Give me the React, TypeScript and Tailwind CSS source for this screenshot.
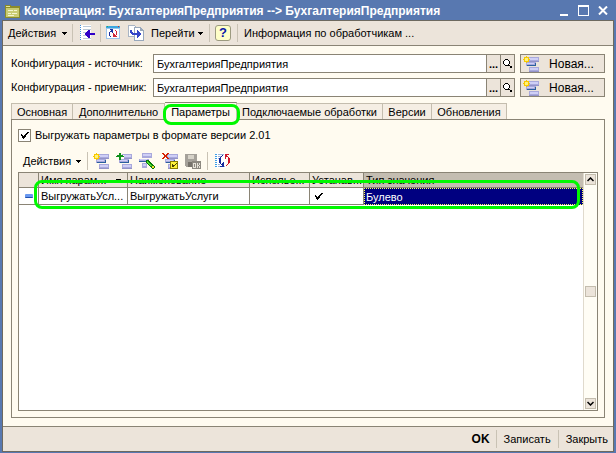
import React from "react";

const Caret = () => (
  <svg width="5" height="3" viewBox="0 0 5 3" shapeRendering="crispEdges" className="shrink-0">
    <path d="M0 0h5v1H0zM1 1h3v1H1zM2 2h1v1H2z" fill="#000" />
  </svg>
);

const Sep = () => <div className="h-[18px] w-px bg-[#c9c2b4]" />;

const Bars = () => (
  <>
    <path d="M5 1h11v5H5zM3 6h10v4H3zM6 11h10v5H6z" fill="#a9a9dc" />
    <path d="M6 2h9v2H6zM4 7h7v1H4zM7 12h8v2H7z" fill="#cfcff6" />
    <path d="M5 5h11v1H5zM6 15h10v1H6z" fill="#9393c8" />
    <path d="M4 9h9v1H4zM12 7h1v2h-1z" fill="#2a5f9e" />
  </>
);

const Icon = ({ children }: { children: React.ReactNode }) => (
  <svg width="16" height="16" viewBox="0 0 16 16" shapeRendering="crispEdges" className="shrink-0">
    {children}
  </svg>
);

const AddIcon = () => (
  <Icon>
    <Bars />
    <path d="M3 0h1v1H3zM3 6h1v1H3zM0 3h1v1H0zM6 3h1v1H6zM1 1h1v1H1zM5 1h1v1H5zM1 5h1v1H1zM5 5h1v1H5zM2 1h3v1H2zM2 5h3v1H2zM1 2h1v3H1zM5 2h1v3H5z" fill="#f7c800" />
    <path d="M2 2h3v3H2z" fill="#fff27a" />
  </Icon>
);
const PlusIcon = () => (
  <Icon>
    <Bars />
    <path d="M2 0h4v2h2v4H5v1H2z" fill="#fffbf0" />
    <path d="M3 0h2v7H3zM0 3h8v1H0zM1 2h6v2H1z" fill="#10901c" />
  </Icon>
);
const EditIcon = () => (
  <Icon>
    <path d="M3 0h10v5H3zM0 6h10v3H0zM3 10h5v5H3z" fill="#a9a9dc" />
    <path d="M4 1h8v2H4zM1 6h7v1H1zM4 11h3v2H4z" fill="#cfcff6" />
    <path d="M0 8h9v1H0z" fill="#2a5f9e" />
    <path d="M7 7h3v1h1v1h1v1h1v1h1v1h1v1h1v2h-1v1h-2v-1h-1v-1h-1v-1h-1v-1H9v-1H8v-1H7z" fill="#087808" />
    <path d="M8 8h1v1h1v1h1v1h1v1h1v1h-2v-1h-1v-1H9v-1H8z" fill="#4fe02f" />
    <path d="M13 13h2v2h-2z" fill="#f6dc30" />
  </Icon>
);
const DeleteIcon = () => (
  <Icon>
    <Bars />
    <path d="M0 0h2v1h1v1h1V1h1V0h2v1H6v1H5v2h1v1h1v1H5V5H4V4H3v1H2v1H0V5h1V4h1V2H1V1H0z" fill="#d42000" />
    <path d="M8 8h8v8H8z" fill="#8b7d00" />
    <path d="M9 9h6v6H9z" fill="#fff23c" />
    <path d="M10 11h1v1h1v1h-1v1h-1zM12 12h1v-1h1v-1h1v1h-1v1h-1v1h-1zM11 12h1v2h-1z" fill="#4a4300" />
  </Icon>
);
const SaveIcon = () => (
  <Icon>
    <path d="M0 1h12v13H1v-1H0z" fill="#a5a19a" />
    <path d="M3 2h6v4H3z" fill="#d6d2c8" />
    <path d="M3 9h5v5H3z" fill="#77736c" />
    <path d="M7 8h9v8H7z" fill="#8c8880" />
    <path d="M8 10h3v5H8zM12 10h1v5h-1zM13 12h1v1h-1zM14 10h1v2h-1zM14 13h1v2h-1z" fill="#e6e2d8" />
    <path d="M9 11h1v3H9z" fill="#8c8880" />
  </Icon>
);
const CycleIcon = () => (
  <Icon>
    <path d="M1 0h10v15H1z" fill="#fff" />
    <path d="M3 1h6v1H3zM3 3h4v1H3zM3 5h2v1H3zM3 11h2v1H3zM3 13h7v1H3z" fill="#9db5d8" />
    <path d="M0 1h2v1H0zM0 3h2v1H0zM0 5h2v1H0zM0 7h2v1H0zM0 9h2v1H0zM0 11h2v1H0zM0 13h2v1H0z" fill="#3d9ee8" />
    <path d="M7 2h1v1H7zM6 3h1v1H6zM5 4h1v7H5zM4 5h1v5H4zM6 11h1v1H6zM7 12h1v1H7zM8 9h1v5H8zM5 13h3v1H5zM7 10h1v2H7z" fill="#172a9c" />
    <path d="M10 1h1v5h-1zM11 1h3v1h-3zM11 2h1v2h-1zM12 3h1v1h-1zM13 4h1v7h-1zM14 5h1v5h-1zM12 11h1v1h-1zM11 12h1v1h-1z" fill="#d0182c" />
  </Icon>
);
const InsertIcon = () => (
  <Icon>
    <path d="M1 0h11v15H1z" fill="#fff" />
    <path d="M4 1h8v1H4zM4 4h8v1H4zM4 7h4v1H4zM4 10h5v1H4zM4 13h8v1H4z" fill="#b9c8d8" />
    <path d="M1 0h1v1H1zM1 2h1v1H1zM1 4h1v1H1zM1 6h1v1H1zM1 8h1v1H1zM1 10h1v1H1zM1 12h1v1H1zM1 14h1v1H1z" fill="#3b8ee0" />
    <path d="M6 8h1V7h1V6h1V5h2v3h5v2h-5v3H9v-1H8v-1H7v-1H6z" fill="#3000c8" />
  </Icon>
);
const RefreshIcon = () => (
  <Icon>
    <path d="M1 2h14v12H1z" fill="#9bc4ea" />
    <path d="M2 4h12v9H2z" fill="#fff" />
    <path d="M1 1h14v2H1z" fill="#3aa6e0" />
    <path d="M2 1h1v1H2z" fill="#30b050" />
    <path d="M13 1h1v1h-1z" fill="#d02020" />
    <path d="M4 7h1v4H4zM5 6h1v1H5zM5 11h1v1H5zM6 5h1v1H6zM5 4h3v1H5zM7 5h1v3H7zM6 6h1v1H6z" fill="#1c2f9e" />
    <path d="M10 5h1v1h-1zM11 6h1v4h-1zM10 10h1v1h-1zM8 8h1v4H8zM9 11h3v1H9zM9 9h1v2H9z" fill="#d02838" />
  </Icon>
);
const GoIcon = () => (
  <Icon>
    <path d="M0 0h7v1h1v1h1v10H0z" fill="#a8b4c4" />
    <path d="M1 1h6v10H1z" fill="#fff" />
    <path d="M6 2h7v1h1v1h1v1h1v11H6z" fill="#98a8bc" />
    <path d="M7 3h5v3h3v9H7z" fill="#fff" />
    <path d="M2 5h2v2h1v1h4V5h1v1h1v1h1v1h1v2h-1v1h-1v1h-1v1H9v-3H4V9H3V8H2z" fill="#3445c8" />
  </Icon>
);
const FolderIcon = () => (
  <Icon>
    <path d="M1 2h6v1h9v12H1z" fill="#8b8b2b" />
    <path d="M2 5h13v9H2z" fill="#c9cc73" />
    <path d="M2 3h4v1H2z" fill="#e2e4a0" />
    <path d="M4 7h5v1H4zM10 7h3v1h-3zM4 10h3v1H4zM8 10h5v1H8zM4 12h6v1H4z" fill="#f4f5cf" />
  </Icon>
);
const SearchIcon = () => (
  <svg width="9" height="9" viewBox="0 0 9 9" shapeRendering="crispEdges">
    <path d="M2 0h3v1H2zM1 1h1v1H1zM5 1h1v1H5zM0 2h1v3H0zM6 2h1v3H6zM1 5h1v1H1zM5 5h1v1H5zM2 6h4v1H2zM6 6h1v1H6zM7 7h2v2H7z" fill="#000" />
    <path d="M2 1h3v5H2zM1 2h5v3H1z" fill="#fff" />
  </svg>
);
const Tick = () => (
  <svg width="8" height="7" viewBox="0 0 8 7" shapeRendering="crispEdges">
    <path d="M0 2h1v1h1v1h1V3h1V2h1V1h1V0h2v1H7v1H6v1H5v1H4v1H3v1H2V5H1V4H0zM1 4h4v1H4v1H3v1H2V6H1zM6 1h1v1H6z" fill="#000" />
  </svg>
);

const Row = ({ id, label }: { id: string; label: string }) => (
  <div className="flex h-[19px] items-stretch">
    <label htmlFor={id} className="w-[142px] shrink-0 leading-[19px] whitespace-nowrap">
      {label}
    </label>
    <div className="flex min-w-0 flex-1 border border-[#8a8475] bg-white">
      <input id={id} defaultValue="БухгалтерияПредприятия" className="min-w-0 flex-1 bg-white px-[3px] outline-none" />
      <button className="w-[14px] border-l border-[#8a8475] bg-[#ece4da] leading-3 font-bold">...</button>
      <button aria-label="Открыть" className="flex w-[14px] items-center justify-center border-l border-[#8a8475] bg-[#ece4da]">
        <SearchIcon />
      </button>
    </div>
    <button className="ml-[5px] flex w-[85px] items-center border border-t-[#8a8475] border-r-[#8a8475] border-b-[#8a8475] border-l-[#8a8475] bg-[#ece4da] pl-[2px] text-[12px]">
      <AddIcon />
      <span className="flex-1 text-center">Новая...</span>
    </button>
  </div>
);

const tabs = [
  { name: "Основная", width: "w-[62px]" },
  { name: "Дополнительно", width: "w-[92px]" },
  { name: "Параметры", width: "w-[72px]" },
  { name: "Подключаемые обработки", width: "w-[146px]" },
  { name: "Версии", width: "w-[49px]" },
  { name: "Обновления", width: "w-[75px]" },
];

const Th = ({ children, active }: { children?: React.ReactNode; active?: boolean }) => (
  <th
    className={
      "h-[15px] overflow-hidden border-b border-[#8a8475] px-[2px] text-left leading-[14px] font-normal whitespace-nowrap " +
      (active ? "bg-[#c4bdb1]" : "border-r bg-[#ece4da]")
    }
  >
    {children}
  </th>
);

const td = "h-[17px] overflow-hidden border-r border-b border-[#8a8475] px-[2px] leading-4 whitespace-nowrap";

export default function App() {
  return (
    <div className="flex min-h-screen flex-col bg-[#5878b0] pr-[2px] pb-px pl-[2px] font-['Liberation_Sans',Arial,sans-serif] text-[11px] leading-4 text-black">
      <header className="flex h-5 items-center pt-px pl-[2px] text-white">
        <FolderIcon />
        <h1 className="ml-1 flex-1 text-[12px] font-bold whitespace-nowrap">
          Конвертация: БухгалтерияПредприятия --&gt; БухгалтерияПредприятия
        </h1>
        <div className="flex items-center gap-[9px] pr-[6px]">
          <button aria-label="Свернуть" className="flex h-[11px] w-[9px] items-end">
            <span className="h-[2px] w-2 bg-white" />
          </button>
          <button aria-label="Развернуть" className="h-[11px] w-[11px] border border-t-2 border-white" />
          <button aria-label="Закрыть окно">
            <svg width="10" height="9" viewBox="0 0 10 9">
              <path d="M1 0.500L9 8.500M9 0.500L1 8.500" stroke="#fff" strokeWidth="2" />
            </svg>
          </button>
        </div>
      </header>

      <div className="flex flex-1 flex-col border border-[#6d695f] bg-[#fffbf0]">
        <div className="flex h-[25px] items-center border-b border-[#8a8475] bg-[#ece4da] pl-[5px]">
          <button className="flex w-[59px] items-center justify-between whitespace-nowrap">
            Действия <Caret />
          </button>
          <div className="ml-[5px] flex items-center">
            <Sep />
            <button aria-label="Вставить" className="ml-[6px]"><InsertIcon /></button>
            <div className="ml-[5px]"><Sep /></div>
            <button aria-label="Обновить" className="ml-[4px]"><RefreshIcon /></button>
            <button className="ml-[7px] flex items-center whitespace-nowrap">
              <GoIcon />
              <span className="ml-[7px] flex w-[52px] items-center justify-between">Перейти <Caret /></span>
            </button>
            <div className="ml-[6px]"><Sep /></div>
            <button aria-label="Справка" className="ml-[5px] flex h-4 w-4 items-center justify-center rounded-[3px] border border-[#9c9a80] bg-[#ffffc8] text-[13px] font-bold text-[#0a18a8]">
              ?
            </button>
            <div className="ml-[6px]"><Sep /></div>
            <button className="ml-[6px] whitespace-nowrap">Информация по обработчикам ...</button>
          </div>
        </div>

        <main className="flex flex-1 flex-col px-2 pt-2 pb-2">
          <div className="flex flex-col gap-[5px]">
            <Row id="src" label="Конфигурация - источник:" />
            <Row id="dst" label="Конфигурация - приемник:" />
          </div>

          <nav role="tablist" className="relative mt-[5px] flex h-[17px] items-end">
            {tabs.map((t, i) => (
              <button
                key={t.name}
                role="tab"
                aria-selected={i === 2}
                className={
                  "flex items-center justify-center border-t border-r border-[#c4bdae] whitespace-nowrap " +
                  t.width +
                  (i === 2 ? " z-10 -mb-px h-[18px] border-t-[#8a8475] bg-[#fffbf0]" : " h-4 bg-[#f5eee4]") +
                  (i === 0 ? " border-l" : "")
                }
              >
                {t.name}
              </button>
            ))}
            <div className="pointer-events-none absolute top-[2px] left-[152px] z-20 h-[21px] w-[77px] rounded-[8px] border-[3px] border-[#00f800]" />
          </nav>

          <section className="flex flex-1 flex-col border border-[#8a8475] px-[6px] pt-2 pb-[6px]">
            <label className="flex h-[14px] items-center gap-[4px] whitespace-nowrap">
              <span className="relative flex h-[13px] w-[13px] shrink-0 items-center justify-center">
                <input type="checkbox" defaultChecked className="peer absolute inset-0 appearance-none border border-[#8a8475] bg-white" />
                <span className="pointer-events-none relative hidden peer-checked:block"><Tick /></span>
              </span>
              Выгружать параметры в формате версии 2.01
            </label>

            <div className="mt-[8px] flex h-[22px] items-center pl-[5px]">
              <button className="flex w-[58px] items-center justify-between whitespace-nowrap">
                Действия <Caret />
              </button>
              <div className="ml-[6px]"><Sep /></div>
              <div className="ml-[5px] flex gap-[7px]">
                <button aria-label="Добавить"><AddIcon /></button>
                <button aria-label="Добавить копированием"><PlusIcon /></button>
                <button aria-label="Изменить"><EditIcon /></button>
                <button aria-label="Удалить"><DeleteIcon /></button>
                <button aria-label="Записать строку" disabled><SaveIcon /></button>
              </div>
              <div className="ml-[6px]"><Sep /></div>
              <button aria-label="Обновить список" className="ml-[7px]"><CycleIcon /></button>
            </div>

            <div className="relative flex flex-1 border border-[#8a8475] bg-white">
              <div className="min-w-0 flex-1">
                <table className="w-full table-fixed border-separate border-spacing-0">
                  <colgroup>
                    <col className="w-5" />
                    <col className="w-[89px]" />
                    <col className="w-[122px]" />
                    <col className="w-[60px]" />
                    <col className="w-[54px]" />
                    <col />
                  </colgroup>
                  <thead>
                    <tr>
                      <Th />
                      <Th>
                        <span className="flex items-center justify-between pr-[4px]">Имя парам... <Caret /></span>
                      </Th>
                      <Th>Наименование</Th>
                      <Th>Исполье...</Th>
                      <Th>Устанав...</Th>
                      <Th active>Тип значения</Th>
                    </tr>
                  </thead>
                  <tbody>
                    <tr>
                      <td className={td}>
                        <div className="ml-1 h-[4px] w-2 rounded-[1px] border-b border-[#2050b0] bg-[#6898f0]" />
                      </td>
                      <td className={td}>ВыгружатьУсл...</td>
                      <td className={td}>ВыгружатьУслуги</td>
                      <td className={td} />
                      <td className={td}><div className="pl-[3px]"><Tick /></div></td>
                      <td className="h-[17px] border border-dotted border-[#ffff60] bg-[#000080] px-px leading-[14px] text-white">Булево</td>
                    </tr>
                  </tbody>
                </table>
              </div>
              <div className="flex w-[14px] flex-col items-center border-l border-[#e0dacd] bg-[#fffdf5] py-px">
                <button aria-label="Вверх" className="flex h-[11px] w-[11px] items-center justify-center border border-[#c4bdae] bg-[#ece4da]">
                  <svg width="7" height="5" viewBox="0 0 7 5"><path d="M0.500 4L3.500 1L6.500 4" fill="none" stroke="#000" strokeWidth="1.500" /></svg>
                </button>
                <div className="flex-1" />
                <div className="h-[11px] w-[11px] border border-[#c4bdae] bg-[#ece4da]" />
                <div className="flex-1" />
                <button aria-label="Вниз" className="flex h-[11px] w-[11px] items-center justify-center border border-[#c4bdae] bg-[#ece4da]">
                  <svg width="7" height="5" viewBox="0 0 7 5"><path d="M0.500 1L3.500 4L6.500 1" fill="none" stroke="#000" strokeWidth="1.500" /></svg>
                </button>
              </div>
              <div className="pointer-events-none absolute top-[7px] right-[17px] left-[15px] h-[29px] rounded-[8px] border-[3px] border-[#00f800]" />
            </div>
          </section>
        </main>

        <footer className="flex h-[25px] items-center justify-end border-t border-[#8a8475] bg-[#ece4da] pr-[5px]">
          <button className="mr-[6px] text-[12px] font-bold">OK</button>
          <Sep />
          <button className="mx-[7px]">Записать</button>
          <Sep />
          <button className="ml-[7px]">Закрыть</button>
        </footer>
      </div>
    </div>
  );
}
